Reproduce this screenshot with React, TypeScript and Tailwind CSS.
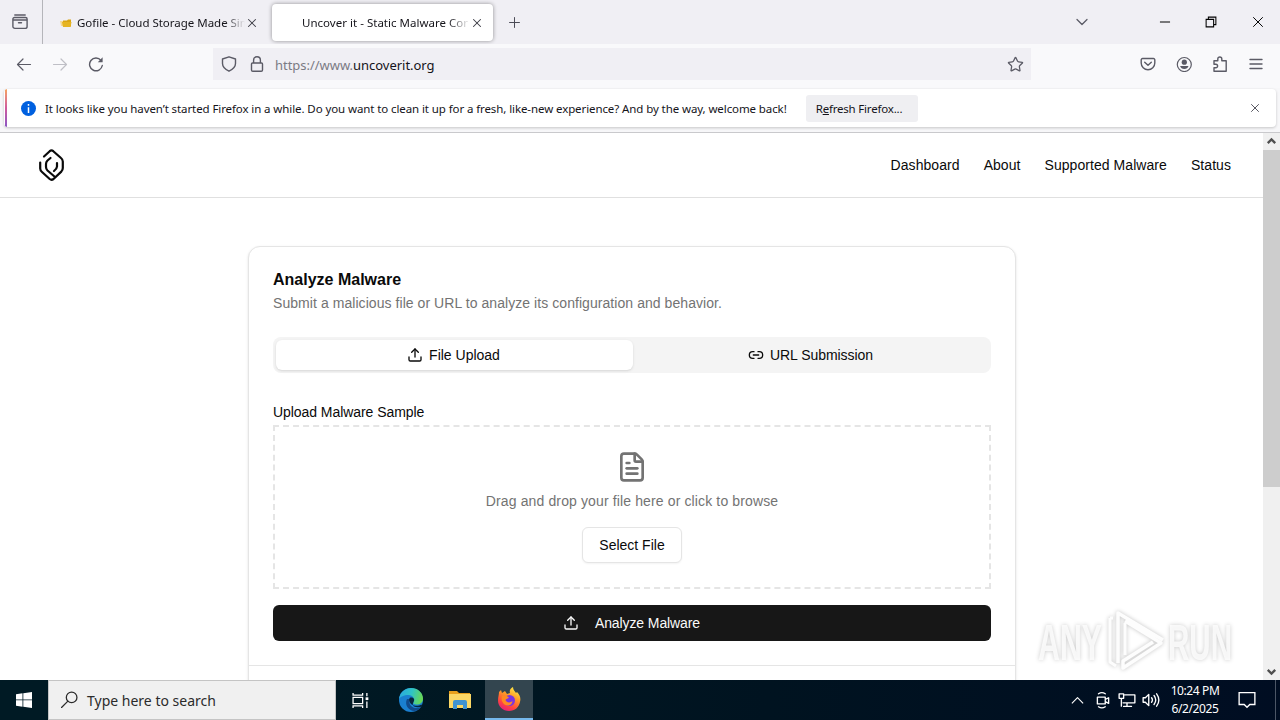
import type { ReactNode } from 'react'
import { ChevronDown, FileText, Link2, Minus, Plus, Star, Upload, X } from 'lucide-react'

const navLinks = ['Dashboard', 'About', 'Supported Malware', 'Status']

function Glyph({ size = 16, className = '', children }: { size?: number; className?: string; children: ReactNode }) {
  return (
    <svg
      width={size}
      height={size}
      viewBox="0 0 16 16"
      fill="none"
      stroke="currentColor"
      strokeWidth={1.2}
      strokeLinecap="round"
      strokeLinejoin="round"
      className={`shrink-0 ${className}`}
    >
      {children}
    </svg>
  )
}

function TabBar() {
  return (
    <div className="flex h-11 shrink-0 items-center bg-[#f0eff4] text-[#15141a]">
      <div className="flex h-11 w-[43px] shrink-0 items-center border-r border-[#b5b5ba] pl-3">
        <Glyph className="text-[#5b5b66]">
          <path d="M2.800 1h10.400M2.500 3.500h11a1.600 1.600 0 0 1 1.600 1.600v7.300a2 2 0 0 1-2 2H2.900a2 2 0 0 1-2-2V5.100A1.600 1.600 0 0 1 2.500 3.500zM1 6h14M6.500 8.800h3" strokeWidth={1.4} />
        </Glyph>
      </div>
      <div className="flex h-full w-[229px] shrink-0 items-center pl-4 pt-0.5">
        <svg width="14" height="12" viewBox="0 0 14 12" className="shrink-0">
          <path d="M1 4h4v5H2z" fill="#f6d995" />
          <path d="M4 3.500h4l1-1h3v7H4z" fill="#d9a514" />
          <path d="M3 5h9.500l-1 5H4z" fill="#e6b422" />
        </svg>
        <span className="ml-1 w-[168px] overflow-hidden whitespace-nowrap text-[11.5px] tracking-[-0.02px] [mask-image:linear-gradient(to_right,black_148px,transparent_168px)]">
          Gofile - Cloud Storage Made Simple
        </span>
        <X size={14} strokeWidth={1.8} className="shrink-0 text-[#3b3b44]" />
      </div>
      <div className="flex h-[37px] w-[221px] shrink-0 items-center rounded-[4px] bg-white pl-[30px] pt-0.5 shadow-[0_0_4px_rgba(0,0,0,0.4)]">
        <span className="w-[166px] overflow-hidden whitespace-nowrap text-[11.5px] tracking-[0.02px] [mask-image:linear-gradient(to_right,black_146px,transparent_168px)]">
          Uncover it - Static Malware Config
        </span>
        <X size={14} strokeWidth={1.8} className="ml-[2px] shrink-0 text-[#3b3b44]" />
      </div>
      <Plus size={17} strokeWidth={1.4} className="ml-[13px] shrink-0 text-[#4a4a55]" />
      <div className="ml-auto flex items-center">
        <ChevronDown size={20} strokeWidth={1.500} className="text-[#5b5b66]" />
        <Minus size={16} strokeWidth={1.500} className="ml-[65px] text-black" />
        <Glyph size={12} className="ml-8 text-black">
          <path d="M1.500 4.500h10v10h-10zM4.500 4V1.500h10v10H12" strokeWidth={1.400} strokeLinejoin="miter" />
        </Glyph>
        <X size={18} strokeWidth={1.300} className="ml-[32px] mr-[13px] text-black" />
      </div>
    </div>
  )
}

function Toolbar() {
  return (
    <div className="flex h-11 shrink-0 items-start bg-[#f9f9fb] pt-1 text-[#5b5b66]">
      <div className="flex h-8 w-[213px] shrink-0 items-center gap-5 pl-4">
        <Glyph>
          <path d="M14.500 8.500H1.500M7 3 1.500 8.500 7 14" />
        </Glyph>
        <Glyph className="text-[#bfbfc6]">
          <path d="M1.500 8.500h13M9 3l5.500 5.500L9 14" />
        </Glyph>
        <Glyph>
          <path d="M14.300 9.500A6.400 6.400 0 1 1 13 4.400" strokeWidth={1.400} />
          <path d="M14.600 1.200v5H9.800z" fill="currentColor" stroke="none" />
        </Glyph>
      </div>
      <div className="flex h-8 w-[818px] shrink-0 items-center bg-[#f0eff4] pl-2 pr-[7px]">
        <Glyph>
          <path d="M8 .8 14.500 3v4.500c0 3.500-3 6-6.500 7.700C4.500 13.500 1.500 11 1.500 7.500V3z" strokeWidth={1.400} />
        </Glyph>
        <Glyph className="ml-3">
          <path d="M3.500 7h9a1 1 0 0 1 1 1v6a1.300 1.300 0 0 1-1.300 1.300H3.800A1.300 1.300 0 0 1 2.500 14V8a1 1 0 0 1 1-1zM4.600 7V4.200a3.400 3.400 0 0 1 6.800 0V7" strokeWidth={1.400} />
        </Glyph>
        <span className="ml-[10px] pt-[3px] text-[13px] tracking-[-0.03px] text-[#7b7b84]">
          https://www.<span className="text-[#15141a]">uncoverit.org</span>
        </span>
        <Star size={17} strokeWidth={1.800} className="ml-auto" />
      </div>
      <div className="flex h-8 flex-1 items-center justify-end gap-5 pr-4">
        <Glyph>
          <path d="M2.500 2.500h11a1.300 1.300 0 0 1 1.300 1.300V7A6.800 6.800 0 0 1 1.200 7V3.800a1.300 1.300 0 0 1 1.300-1.300zM4.700 6.200 8 9.300l3.300-3.100" strokeWidth={1.400} />
        </Glyph>
        <Glyph>
          <circle cx="8.300" cy="8.500" r="7" />
          <circle cx="8.300" cy="6.200" r="2.600" fill="currentColor" stroke="none" />
          <path d="M4.100 10h8.400c-.6 2-2 3-4.200 3s-3.600-1-4.200-3z" fill="currentColor" stroke="none" />
        </Glyph>
        <Glyph>
          <path d="M2 4.800h3.800V3a2 2 0 0 1 4 0v1.800h4.400v10.400H2v-3.400h1.800a1.800 1.800 0 0 0 0-3.600H2z" strokeWidth={1.400} />
        </Glyph>
        <Glyph>
          <path d="M2 3.500h12M2 8h12M2 12.500h12" strokeWidth={1.400} />
        </Glyph>
      </div>
    </div>
  )
}

function NotificationBar() {
  return (
    <div className="flex h-[45px] shrink-0 items-start border-b border-[#c9c9cc] bg-[#f7f7f9] px-1 pt-px">
      <div className="flex h-[38px] w-full items-center overflow-hidden rounded-[4px] bg-white shadow-[0_1px_3px_rgba(0,0,0,0.2)]">
        <div className="ml-[1px] h-full w-[2px] shrink-0 bg-linear-to-b from-[#f5a35c] via-[#d05a9c] to-[#8a54c4]" />
        <svg width="15" height="15" viewBox="0 0 15 15" className="ml-[14px] shrink-0">
          <circle cx="7.500" cy="7.500" r="7.500" fill="#0060df" />
          <path d="M7.500 3v1.800M7.500 6.300V12" stroke="#fff" strokeWidth="1.500" />
        </svg>
        <span className="ml-[9px] w-[761px] shrink-0 whitespace-nowrap pt-px text-[11.5px] tracking-[-0.095px] text-[#15141a]">
          It looks like you haven’t started Firefox in a while. Do you want to clean it up for a fresh, like-new experience? And by the way, welcome back!
        </span>
        <button className="h-[27px] w-[112px] shrink-0 rounded-[3px] bg-[#efeff2] pt-px pr-1.5 text-[11.5px] tracking-[-0.2px] text-[#15141a]">
          R<span className="underline">e</span>fresh Firefox...
        </button>
        <X size={14} strokeWidth={1.600} className="ml-auto mr-[14px] text-[#4a4a55]" />
      </div>
    </div>
  )
}

function Header() {
  return (
    <header className="flex h-[65px] shrink-0 items-center border-b border-[#e0e0e0] pl-[38px] pr-8">
      <svg width="27" height="34" viewBox="0 0 27 34" fill="none" stroke="#0a0a0a" strokeWidth="2.200" strokeLinecap="round" strokeLinejoin="round">
        <path d="M6 8.500 11.700 3.200Q13.500 1.700 15.300 3.200L23 10Q24.800 11.500 24.800 13.500V20Q24.800 22 23.300 23.600L15.500 31Q13.500 32.500 11.700 31L4 24Q2.200 22.500 2.200 20.500V14.500" />
        <path d="M12.500 10 9.500 12.500Q8 14 8 16V19Q8 21 9.500 22.500L17 29M19 15V18.500Q19 20.500 16 23" />
      </svg>
      <nav className="ml-auto flex gap-6 text-[14px] tracking-[0.06px] text-[#0a0a0a]">
        {navLinks.map((link) => (
          <a key={link}>{link}</a>
        ))}
      </nav>
    </header>
  )
}

function AnalyzeCard() {
  return (
    <section className="h-[500px] w-[768px] shrink-0 rounded-xl border border-[#e5e5e5] bg-white text-[14px] text-[#0a0a0a] shadow-sm">
      <div className="px-6 pt-6">
        <h1 className="pt-px text-[16px] font-bold leading-4">Analyze Malware</h1>
        <p className="mt-[5px] leading-5 tracking-[0.06px] text-[#737373]">
          Submit a malicious file or URL to analyze its configuration and behavior.
        </p>
        <div className="mt-6 flex h-9 rounded-lg bg-[#f4f4f4] p-[3px]">
          <div className="flex flex-1 items-center justify-center gap-1.5 rounded-md bg-white pr-0.5 shadow-sm">
            <Upload size={16} />
            File Upload
          </div>
          <div className="flex flex-1 items-center justify-center gap-1.5 tracking-[-0.05px]">
            <Link2 size={16} />
            URL Submission
          </div>
        </div>
        <p className="mt-8 leading-[14px] tracking-[-0.06px]">Upload Malware Sample</p>
        <div className="mt-1.5 flex h-[164px] flex-col items-center border-2 border-dashed border-[#e5e5e5] pt-6">
          <FileText size={32} className="text-[#737373]" />
          <p className="mt-2 leading-5 tracking-[0.13px] text-[#737373]">Drag and drop your file here or click to browse</p>
          <button className="mt-4 h-9 w-[100px] rounded-md border border-[#e5e5e5] bg-white shadow-xs">Select File</button>
        </div>
        <button className="mt-4 flex h-9 w-full items-center justify-center gap-4 rounded-md bg-[#171717] pr-px tracking-[-0.1px] text-[#fafafa]">
          <Upload size={16} />
          Analyze Malware
        </button>
      </div>
      <div className="mt-6 border-t border-[#e5e5e5]" />
    </section>
  )
}

function Watermark() {
  return (
    <svg
      width="204"
      height="72"
      viewBox="0 0 204 72"
      className="absolute left-[1036px] top-[474px] drop-shadow-[0_0_2px_rgba(0,0,0,0.24)]"
    >
      <g fill="#fdfdfd" fillOpacity="0.85" fontFamily="Liberation Sans" fontSize="50" fontWeight="bold">
        <text x="2" y="53" textLength="64" lengthAdjust="spacingAndGlyphs">ANY</text>
        <text x="132" y="53" textLength="64" lengthAdjust="spacingAndGlyphs">RUN</text>
      </g>
      <g fill="none" stroke="#fdfdfd" strokeWidth="4" strokeLinejoin="round">
        <path d="M82 56V6L127 33M89 14l36 22-38 25V54l30-19" strokeWidth="3.500" />
        <path d="M89 16v32M74 11v44l6 4M74 11h3" strokeWidth="3" />
      </g>
    </svg>
  )
}

function Scrollbar() {
  return (
    <div className="flex w-[17px] shrink-0 flex-col items-center bg-[#f0f0f0] text-[#505050]">
      <Glyph size={17}>
        <path d="m4.500 9.500 3.500-3.500 3.500 3.500" strokeWidth={2.200} strokeLinecap="butt" strokeLinejoin="miter" />
      </Glyph>
      <div className="h-[337px] w-full bg-[#cdcdcd]" />
      <Glyph size={17} className="mt-auto">
        <path d="m4.500 6.500 3.500 3.500 3.500-3.500" strokeWidth={2.200} strokeLinecap="butt" strokeLinejoin="miter" />
      </Glyph>
    </div>
  )
}

function EdgeIcon() {
  return (
    <svg width="26" height="26" viewBox="0 0 26 26">
      <defs>
        <linearGradient id="edgeTop" x1="0" y1="0.3" x2="1" y2="0.5">
          <stop offset="0" stopColor="#2aa8e0" />
          <stop offset="0.5" stopColor="#2fc3c6" />
          <stop offset="1" stopColor="#6ad850" />
        </linearGradient>
      </defs>
      <circle cx="13" cy="13" r="12" fill="#1a7fd0" />
      <path d="M1 12C2 5 7 1 13 1c7 0 12 5 12 10.500 0 4-3 6-6.500 6-2.500 0-4-1-3-2.500 2-3-.5-7-5-7C6 8 2 10 1 12z" fill="url(#edgeTop)" />
      <path d="M9 12c-3 6 2 13 9 11.800 2-.5 4-2 5-3.800-7 3-12-1-11.500-5.500L12 12z" fill="#114a8b" />
      <path d="M15.500 15c2-3-.5-5-3-4.500-2 .5-1.500 4 .5 6.500 3 2.500 8 2 10.500.5l1 1.800c-2 1-6 1.200-8.500.2-1.500-1-1.500-3-.5-4.500z" fill="#06243d" />
    </svg>
  )
}

function FolderIcon() {
  return (
    <svg width="22" height="20" viewBox="0 0 22 20">
      <path d="M0 1h8l2 2h11v5H0z" fill="#e8a01c" />
      <path d="M0 4h22v14H0z" fill="#fbd765" />
      <path d="M4 19v-7q0-2 2-2h10q2 0 2 2v7h-4v-4H8v4z" fill="#3f93d2" />
    </svg>
  )
}

function FirefoxIcon() {
  return (
    <svg width="24" height="25" viewBox="0 0 24 25">
      <defs>
        <linearGradient id="fox" x1="0.8" y1="0" x2="0.3" y2="1">
          <stop offset="0" stopColor="#fff04a" />
          <stop offset="0.400" stopColor="#ff9a26" />
          <stop offset="0.750" stopColor="#ff4340" />
          <stop offset="1" stopColor="#e5207b" />
        </linearGradient>
      </defs>
      <path d="M2 5 4 3l1 3 3-2 2 3 3-1c-1-3 1-5 3-6 0 3 2 4 3 6l1-1c3 3 4 6 3 10-1 5-5 9-11 9S1 19.500 1 13.500C1 10 2 8 2 5z" fill="url(#fox)" />
      <circle cx="12.500" cy="13.500" r="5.500" fill="#7a35e0" />
      <path d="M5 9c3-1 5 0 7 1.500-1 1.500-3 1-3.500 2.500 1 3 5 3 7 1 0 4-5 6-8 3.500C5 15.500 4 12 5 9z" fill="#ff8a21" />
    </svg>
  )
}

function Taskbar() {
  return (
    <div className="flex h-10 shrink-0 bg-linear-to-r from-[#001a24] from-20% via-[#001320] via-60% to-[#000d22] text-white">
      <div className="flex w-12 items-center justify-center">
        <svg width="16" height="16" viewBox="0 0 16 16" fill="#fff">
          <path d="M0 2.200 6.500 1.300v6.200H0zM7.300 1.200 16 0v7.500H7.300zM0 8.300h6.500v6.400L0 13.800zM7.300 8.300H16V16l-8.700-1.200z" />
        </svg>
      </div>
      <div className="flex w-[288px] items-center border border-[#c4c4c4] bg-[#f0f0f0] pl-3 text-[#2b2b2b]">
        <Glyph size={17} className="-mt-0.5">
          <circle cx="10" cy="6" r="5" />
          <path d="m6.500 9.500-6 6" />
        </Glyph>
        <span className="ml-[9px] pt-px text-[14px]">Type here to search</span>
      </div>
      <div className="flex w-12 items-center justify-center">
        <Glyph size={17}>
          <path d="M1 1v2h9V1M1 15v-2h9v2M1 5h9v6H1zM14 1v3M14 9v6" strokeLinecap="butt" strokeLinejoin="miter" />
          <path d="M12.800 5h2.600v2.600h-2.600z" fill="currentColor" stroke="none" />
        </Glyph>
      </div>
      <div className="flex w-[53px] items-center justify-center"><EdgeIcon /></div>
      <div className="flex w-12 items-center justify-center pr-[3px]"><FolderIcon /></div>
      <div className="flex w-12 items-center justify-center border-b-2 border-[#76b9ed] bg-[#33454f]"><FirefoxIcon /></div>
      <div className="ml-auto flex items-center">
        <Glyph size={15}>
          <path d="m2 11 6-6 6 6" strokeLinecap="butt" />
        </Glyph>
        <Glyph size={18} className="ml-[9px]">
          <path d="M3 5.500h7v6H3zM10 7.500l3-1.500v5l-3-1.500M4 2.500q3-2 6 0M4 14q3 2 6 0" />
        </Glyph>
        <Glyph size={18} className="ml-[6px]">
          <path d="M6 3.500h9v7H4.500M8 10.500v3M5 13.700h7M1 2.500h4v4H1zM3 6.500v7" />
        </Glyph>
        <Glyph size={18} className="ml-[6px]">
          <path d="M1 6v4h2l3 3V3L3 6zM8.500 6q1.500 2 0 4M10.700 4q3 4 0 8M13 2.500q4 5.500 0 11" />
        </Glyph>
        <div className="ml-[6px] w-[58px] whitespace-nowrap text-center text-[12px] leading-[18px] tracking-[-0.4px]">
          <div>10:24 PM</div>
          <div>6/2/2025</div>
        </div>
        <Glyph size={18} className="ml-[14px] mr-[19px]">
          <path d="M1 1.500h14v10.500h-4.500L8 14.500 5.500 12H1z" strokeLinejoin="miter" />
        </Glyph>
        <div className="mr-1 h-10 w-px bg-[#4c5666]" />
      </div>
    </div>
  )
}

export default function App() {
  return (
    <div className="flex h-[720px] w-[1280px] flex-col overflow-hidden bg-white font-['Noto_Sans',sans-serif]">
      <TabBar />
      <Toolbar />
      <NotificationBar />
      <div className="relative flex min-h-0 flex-1 overflow-hidden">
        <main className="flex flex-1 flex-col overflow-hidden font-['Liberation_Sans',sans-serif]">
          <Header />
          <div className="flex justify-center pl-px pt-12">
            <AnalyzeCard />
          </div>
        </main>
        <Scrollbar />
        <Watermark />
      </div>
      <Taskbar />
    </div>
  )
}
